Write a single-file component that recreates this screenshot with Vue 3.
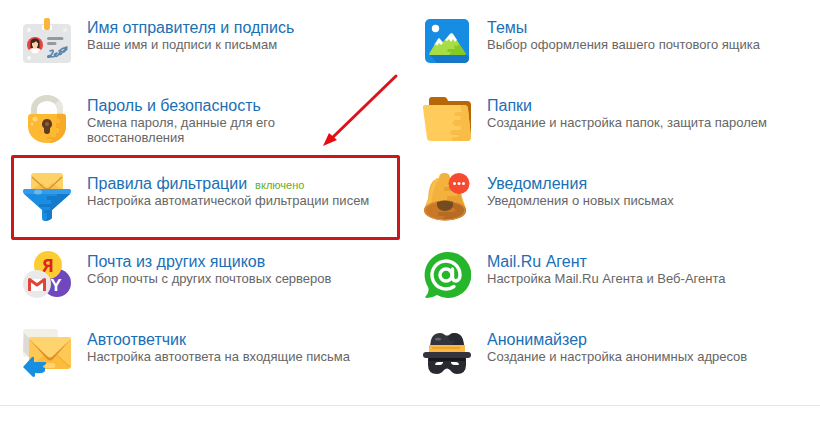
<template>
  <main class="settings">
    <ul class="settings-grid">
      <li
        v-for="item in items"
        :key="item.id"
        class="item"
        :class="{ marked: item.marked }"
      >
        <svg v-if="item.id === 'sender'" class="icon" viewBox="0 0 48 48" aria-hidden="true">
          <rect y="7" width="48" height="39" rx="4" fill="#e3e5e7" />
          <circle cx="6" cy="13" r="2" fill="#f7f8f8" />
          <circle cx="6" cy="41" r="2" fill="#f7f8f8" />
          <circle cx="42" cy="13" r="2" fill="#f0f1f2" />
          <rect x="19" y="8" width="10" height="5" rx="1" fill="#fff" />
          <rect x="21" y="1" width="6" height="12" rx="2" fill="#fbb53b" />
          <circle cx="12" cy="28" r="8" fill="#e8443e" />
          <path d="M6 33.5Q7 31 11 31h2q4 0 5 2.5A8 8 0 0 1 6 33.5Z" fill="#fff" />
          <path d="M7.5 31V26q0-4.5 4.5-4.5t4.5 4.5v5Z" fill="#3b2525" />
          <path d="M9 26q3 0 4-2 1 2 2 2v2q-.5 3-3 4-2.5-1-3-4Z" fill="#fbd2ac" />
          <path d="M25.5 21.5H39M25.5 26.5H32" stroke="#919a9e" stroke-width="3" stroke-linecap="round" />
          <path d="M27 34q4-2 3 1l-3 5q-3 1-2-1 2-1 4 1 3 0 5-4-4 1-2 3t5-4q-1 4 1 2l6-7q-5 1-8 4l5 1 3-3" fill="none" stroke="#5786ad" stroke-width="1.6" stroke-linejoin="round" stroke-linecap="round" />
        </svg>

        <svg v-else-if="item.id === 'themes'" class="icon" viewBox="0 0 48 48" aria-hidden="true">
          <rect x="2" y="2" width="44" height="44" rx="5" fill="#168de2" />
          <path d="M6 37 14 46h27q5 0 5-5v-1l-4-4Z" fill="#1677c8" />
          <circle cx="12.5" cy="11.5" r="3.7" fill="#fff" />
          <path d="M6.5 36 15 22q1-1.5 2 0l3 3 7-8q1.5-1.5 3 0l12 19q1 2-1 2H7.5q-2 0-1-2Z" fill="#a7dd45" />
          <path d="m31 28 3 1 2-2 6.5 9q1 2-1 2H26l2-3h-4l1-3h7Z" fill="#85c927" />
          <path d="m11 28.5 4-6.5q1-1.5 2 0l3 4-2 2-2-2-2 3-1-2ZM22 23l5-6q1.5-1.5 3 0l4 6-2 2-2-3-2 3-2-3-2 2Z" fill="#fff" />
        </svg>

        <svg v-else-if="item.id === 'password'" class="icon" viewBox="0 0 48 48" aria-hidden="true">
          <path d="M11 22V14a13 11 0 0 1 26 0V22" fill="none" stroke="#d9d9ce" stroke-width="6" />
          <path d="M34 7a13 11 0 0 1 3 7V18" fill="none" stroke="#e9e8df" stroke-width="6" />
          <path d="M5 22q0-3 3-3h32q3 0 3 3v9c0 10-8 17-19 17S5 41 5 31Z" fill="#fdb932" />
          <path d="M34 19h6q3 0 3 3v9c0 10-8 17-17 17l4-4h-6v-2h9v-4h3v-5h-3v-5h4v-4h-3Z" fill="#f9a928" />
          <circle cx="12" cy="24" r="2.5" fill="#ffd87a" />
          <circle cx="9" cy="29" r="1.2" fill="#ffd87a" />
          <path d="M24 24a5 5 0 0 1 3 9v3a3 3 0 0 1-6 0v-3a5 5 0 0 1 3-9Z" fill="#613b20" />
          <circle cx="24" cy="29" r="2" fill="#87603b" />
        </svg>

        <svg v-else-if="item.id === 'folders'" class="icon" viewBox="0 0 48 48" aria-hidden="true">
          <path d="M6 13V5q0-3 3-3h12q3 0 4 4h19q4 0 4 4v30q0 6-5 6Z" fill="#b86708" />
          <path d="M0 13q-1-3 3-3h38q4 0 4 4l3 28q0 4-4 4H8q-4 0-4-3Z" fill="#ffcb5a" />
          <path d="M37 10h4q4 0 4 4l3 28q0 4-4 4H30q-4-3 1-4h4q2-1 0-2h-6q-4-3 1-5h7q2-2 0-4h-5q-5-3 0-6h5q2-2 0-4h-5q-2-2 1-4h6Z" fill="#f9bd47" />
        </svg>

        <svg v-else-if="item.id === 'filters'" class="icon" viewBox="0 0 48 48" aria-hidden="true">
          <rect x="8" width="32" height="24" rx="3" fill="#ffd268" />
          <path d="M9 16 19 10l3 3q2 2 4 0l3-3 10 6Z" fill="#fbc04d" />
          <path d="m9 4 12 11q3 2 6 0L39 4" fill="none" stroke="#d9952e" stroke-width="1.5" />
          <path d="M2 16h44q3 1 1 5L29 37v7q0 3-7 4-3 0-3-3v-8L1 21q-2-4 1-5Z" fill="#188de1" />
          <path d="M2 16h44q2 0 2 3l-2 2H2l-2-2q0-3 2-3Z" fill="#329ce9" />
          <path d="M24 23h10v-2h13L29 37v7q0 3-7 4l2-3v-5h-3v-3h6v-3H16v-3h12v-4h-4Z" fill="#157acb" />
          <ellipse cx="15" cy="19" rx="4" ry="2.5" fill="#6bb8ef" />
        </svg>

        <svg v-else-if="item.id === 'notifications'" class="icon" viewBox="0 0 48 48" aria-hidden="true">
          <path d="M16 5q0-5 5.5-5T27 5c8 2 11 9 12 19l4 12v3H1v-3l4-10C6 13 8 7 16 5Z" fill="#f3b23d" />
          <path d="M15 6c-5 4-7 13-8 21L3 37" fill="none" stroke="#f8be51" stroke-width="3" />
          <path d="M28 6c7 4 9 9 10 19l5 12H27v-4h6v-5h-9v-5h10v-5H21v-4h9Z" fill="#df962c" opacity=".6" />
          <ellipse cx="22" cy="37.5" rx="21" ry="10" fill="#c87827" />
          <path d="M24 29q19 1 19 9-1 10-25 9l4-4h-7v-4h17v-4h-8Z" fill="#aa611f" opacity=".6" />
          <ellipse cx="22" cy="37.5" rx="20" ry="9.5" fill="none" stroke="#dd9639" />
          <path d="M14 29q8-3 16 0v3a8 6 0 0 1-16 0Z" fill="#754b22" />
          <circle cx="36" cy="10.5" r="10.5" fill="#f84a31" />
          <g fill="#fff">
            <circle cx="31.5" cy="10.5" r="1.5" />
            <circle cx="36" cy="10.5" r="1.5" />
            <circle cx="40.5" cy="10.5" r="1.5" />
          </g>
        </svg>

        <svg v-else-if="item.id === 'collector'" class="icon" viewBox="0 0 48 48" aria-hidden="true">
          <circle cx="34" cy="32" r="14" fill="#7048bd" />
          <text class="letter letter-yahoo" x="33" y="40">Y</text>
          <circle cx="25" cy="14" r="14" fill="#fdcb32" />
          <text class="letter letter-yandex" x="25" y="21">Я</text>
          <circle cx="14" cy="33" r="14" fill="#e9e9e9" />
          <path d="M6 28h16v12H6Z" fill="#fff" />
          <path d="M6.5 40V28.5L14 34l7.5-5.5V40" fill="none" stroke="#df453c" stroke-width="3" stroke-linejoin="round" />
        </svg>

        <svg v-else-if="item.id === 'agent'" class="icon" viewBox="0 0 48 48" aria-hidden="true">
          <path d="M24 1a23 23 0 1 1-10 43q-5 3-10 3-3 0-1-2 4-5 2-9A23 23 0 0 1 24 1Z" fill="#27b52b" />
          <circle cx="23" cy="24" r="6" fill="none" stroke="#fff" stroke-width="3.4" />
          <path d="M29.5 18v8q0 4 3.5 4 4-1 4-6a14 14 0 1 0-6 11.5" fill="none" stroke="#fff" stroke-width="3.4" stroke-linecap="round" />
        </svg>

        <svg v-else-if="item.id === 'autoreply'" class="icon" viewBox="0 0 48 48" aria-hidden="true">
          <rect width="35" height="28" rx="3" fill="#f2efe6" />
          <path d="m1 4 5 5v19L0 22Z" fill="#dfdbd2" />
          <rect x="6" y="8" width="42" height="32" rx="3" fill="#ffc753" />
          <path d="m7 38 16-14h8l16 14-2 2H9Z" fill="#fdbb3d" />
          <path d="m7 11 17 19q3 3 6 0l17-19" fill="#d99024" />
          <path d="M6 10q0-2 3-2h36q3 0 3 2L30 27q-3 3-6 0Z" fill="#ffd36d" />
          <path d="m34 26 13 12" stroke="#eea52f" />
          <path d="M22 34h9q3 3 0 5h-9Z" fill="#ffd36d" />
          <path d="M0 38 9 28q2-1 2 1v4h10q3 0 2 2l-3 2q-1 1 2 2v3q-2 3-10 2v3q-1 2-3 0Z" fill="#188ee1" />
        </svg>

        <svg v-else class="icon" viewBox="0 0 48 48" aria-hidden="true">
          <path d="M6 23 8 11q2-7 9-7 3 0 5 2 2 1 4 0 2-2 5-2 7 0 9 7l2 12Z" fill="#34343e" />
          <path d="M27 6q2-2 4-2 7 0 9 7l1 5H28l4-4h-5l-2-4Z" fill="#292932" />
          <ellipse cx="15" cy="10" rx="3" ry="1.5" fill="#62626b" />
          <path d="M6 16h36v8H6Z" fill="#fbb944" />
          <path d="M9 18h28v2H9Z" fill="#eea22f" />
          <path d="M5 28h38v8q0 9-9 9-4 0-7-4-3-3-6 0-3 4-7 4-9 0-9-9Z" fill="#292932" />
          <rect y="23" width="48" height="6" rx="3" fill="#34343e" />
          <path d="M6 29h36v3H6Z" fill="#17171e" />
          <path d="M12 35q1-2 3-2h5v1q-1 2-3 2h-4q-1 0-1-1ZM28 33h5q2 0 3 2 0 1-1 1h-4q-2 0-3-2Z" fill="#fff" />
        </svg>

        <div class="text">
          <div class="heading">
            <a href="#" class="title">{{ item.title }}</a>
            <span v-if="item.status" class="status">{{ item.status }}</span>
          </div>
          <p class="description">{{ item.description }}</p>
        </div>

        <svg v-if="item.marked" class="pointer" viewBox="0 0 80 76" aria-hidden="true">
          <path d="M75 3 10 66" stroke="#d9151b" stroke-width="3" stroke-linecap="round" />
          <path d="m2 73 6-13 8 7Z" fill="#e80c12" />
        </svg>
      </li>
    </ul>
  </main>
</template>

<script setup>
const items = [
  { id: 'sender', title: 'Имя отправителя и подпись', description: 'Ваше имя и подписи к письмам' },
  { id: 'themes', title: 'Темы', description: 'Выбор оформления вашего почтового ящика' },
  { id: 'password', title: 'Пароль и безопасность', description: 'Смена пароля, данные для его восстановления' },
  { id: 'folders', title: 'Папки', description: 'Создание и настройка папок, защита паролем' },
  {
    id: 'filters',
    title: 'Правила фильтрации',
    description: 'Настройка автоматической фильтрации писем',
    status: 'включено',
    marked: true
  },
  { id: 'notifications', title: 'Уведомления', description: 'Уведомления о новых письмах' },
  { id: 'collector', title: 'Почта из других ящиков', description: 'Сбор почты с других почтовых серверов' },
  { id: 'agent', title: 'Mail.Ru Агент', description: 'Настройка Mail.Ru Агента и Веб-Агента' },
  { id: 'autoreply', title: 'Автоответчик', description: 'Настройка автоответа на входящие письма' },
  { id: 'anonymizer', title: 'Анонимайзер', description: 'Создание и настройка анонимных адресов' }
]
</script>

<style>
body {
  background: #fff;
}
</style>

<style scoped>
.settings {
  font-family: "Liberation Sans", Arial, sans-serif;
  border-bottom: 1px solid #e4e4e4;
}

.settings-grid {
  display: grid;
  grid-template-columns: 1fr 1fr;
  column-gap: 23px;
  margin: 0;
  padding: 17px 20px 0 23px;
  list-style: none;
}

.item {
  position: relative;
  display: flex;
  align-items: flex-start;
  gap: 16px;
  min-height: 78px;
}

.item:nth-last-child(-n + 2) {
  min-height: 76px;
}

.icon {
  flex: none;
  width: 48px;
  height: 48px;
}

.letter {
  font-weight: bold;
  text-anchor: middle;
}

.letter-yahoo {
  fill: #fff;
  font-size: 17px;
}

.letter-yandex {
  fill: #dc251b;
  font-family: "Open Sans", sans-serif;
  font-size: 18px;
}

.text {
  max-width: 288px;
  padding-top: 1px;
}

.heading {
  display: flex;
  align-items: baseline;
  gap: 8px;
  height: 19px;
  line-height: 20px;
}

.title {
  color: #1a6fb5;
  font-size: 16px;
  text-decoration: none;
}

.title:hover {
  text-decoration: underline;
}

.status {
  color: #5fae26;
  font-size: 11px;
}

.description {
  margin: 0;
  color: #666;
  font-size: 13px;
  line-height: 15px;
}

.marked::before {
  content: "";
  position: absolute;
  inset: -18px 0 11px -12px;
  border: 3px solid #cb171c;
  border-radius: 2px;
  pointer-events: none;
}

.pointer {
  position: absolute;
  top: -100px;
  right: -1px;
  width: 80px;
  height: 76px;
  pointer-events: none;
}
</style>
